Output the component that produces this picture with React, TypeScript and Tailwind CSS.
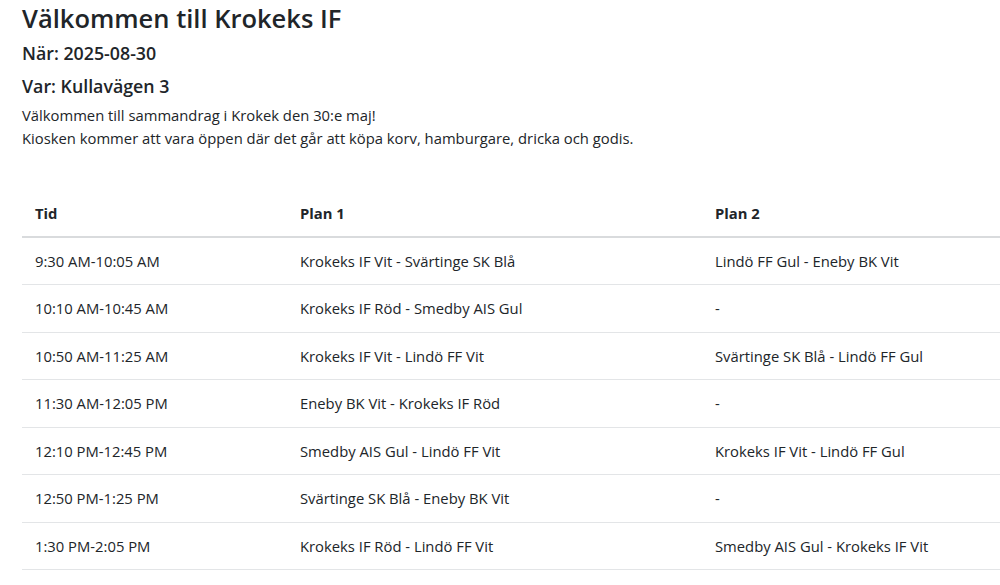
const rows = [
  { tid: "9:30 AM-10:05 AM", plan1: "Krokeks IF Vit - Svärtinge SK Blå", plan2: "Lindö FF Gul - Eneby BK Vit" },
  { tid: "10:10 AM-10:45 AM", plan1: "Krokeks IF Röd - Smedby AIS Gul", plan2: "-" },
  { tid: "10:50 AM-11:25 AM", plan1: "Krokeks IF Vit - Lindö FF Vit", plan2: "Svärtinge SK Blå - Lindö FF Gul" },
  { tid: "11:30 AM-12:05 PM", plan1: "Eneby BK Vit - Krokeks IF Röd", plan2: "-" },
  { tid: "12:10 PM-12:45 PM", plan1: "Smedby AIS Gul - Lindö FF Vit", plan2: "Krokeks IF Vit - Lindö FF Gul" },
  { tid: "12:50 PM-1:25 PM", plan1: "Svärtinge SK Blå - Eneby BK Vit", plan2: "-" },
  { tid: "1:30 PM-2:05 PM", plan1: "Krokeks IF Röd - Lindö FF Vit", plan2: "Smedby AIS Gul - Krokeks IF Vit" },
];

export default function App() {
  return (
    <div
      className="w-[1000px] h-[585px] overflow-hidden bg-white text-[#212529] pl-[22px]"
      style={{ fontFamily: '"Open Sans", "Noto Sans", Arial, sans-serif' }}
    >
      <h1 className="text-[25.5px] font-semibold leading-[36px] mt-0">Välkommen till Krokeks IF</h1>
      <h4 className="text-[17.8px] font-semibold leading-[26px] mt-[4px]">När: 2025-08-30</h4>
      <h4 className="text-[17.8px] font-semibold leading-[26px] mt-[7px]">Var: Kullavägen 3</h4>
      <p className="text-[14.8px] leading-[23px] mt-[5px]">
        Välkommen till sammandrag i Krokek den 30:e maj!
        <br />
        Kiosken kommer att vara öppen där det går att köpa korv, hamburgare, dricka och godis.
      </p>

      <table className="mt-[39px] w-[1000px] border-collapse text-[14.8px] leading-[22.5px]">
        <thead>
          <tr className="border-b-2 border-[#d9dbdd]">
            <th className="w-[266px] text-left font-bold px-[13px] pt-[13px] pb-[11px]">Tid</th>
            <th className="w-[415px] text-left font-bold px-[12px] pt-[13px] pb-[11px]">Plan 1</th>
            <th className="text-left font-bold px-[12px] pt-[13px] pb-[11px]">Plan 2</th>
          </tr>
        </thead>
        <tbody>
          {rows.map((r) => (
            <tr key={r.tid} className="border-b border-[#e3e5e7]">
              <td className="px-[13px] py-[12px]">{r.tid}</td>
              <td className="px-[12px] py-[12px]">{r.plan1}</td>
              <td className="px-[12px] py-[12px]">{r.plan2}</td>
            </tr>
          ))}
        </tbody>
      </table>
    </div>
  );
}
